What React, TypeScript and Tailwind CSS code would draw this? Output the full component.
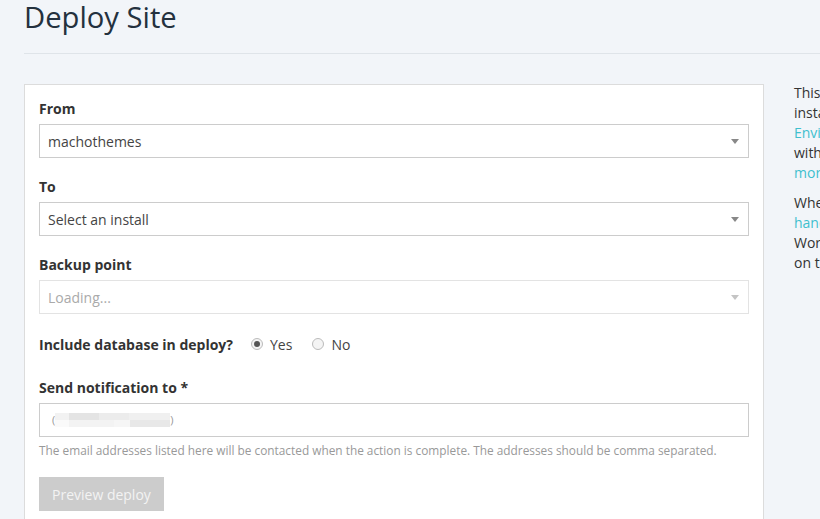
import * as React from "react";

function Caret({ color }: { color: string }) {
  return (
    <svg className="h-[5px] w-[8px] flex-shrink-0" viewBox="0 0 8 5" fill={color}>
      <path d="M0 0h8L4 5z" />
    </svg>
  );
}

interface SelectBoxProps {
  value: string;
  disabled?: boolean;
}

function SelectBox({ value, disabled }: SelectBoxProps) {
  return (
    <div
      className={
        disabled
          ? "flex h-[34px] items-center justify-between border border-[#e3e3e3] bg-white pl-[8px] pr-[9px] text-[14px] text-[#aaa]"
          : "flex h-[34px] items-center justify-between border border-[#ccc] bg-white pl-[8px] pr-[9px] text-[14px] text-[#444]"
      }
    >
      <span>{value}</span>
      <Caret color={disabled ? "#c4c4c4" : "#888"} />
    </div>
  );
}

function Label({ children }: { children: React.ReactNode }) {
  return <label className="mb-[5px] block text-[14px] font-bold leading-[20px] text-[#333]">{children}</label>;
}

function Radio({ checked, label }: { checked?: boolean; label: string }) {
  return (
    <span className="flex items-center gap-[7px] text-[14px] text-[#444]">
      <span className="flex h-[12px] w-[12px] items-center justify-center rounded-full border border-[#bbb] bg-[#f4f4f4]">
        {checked && <span className="h-[6px] w-[6px] rounded-full bg-[#555]" />}
      </span>
      {label}
    </span>
  );
}

export default function App() {
  return (
    <div
      className="h-[519px] w-[820px] overflow-hidden bg-[#f2f5f9] text-[#333]"
      style={{ fontFamily: '"Open Sans", "Noto Sans", sans-serif' }}
    >
      <div className="pl-[24px]">
        <h1 className="-mt-[1px] text-[29.2px] font-normal leading-[36px] text-[#24313e]">Deploy Site</h1>
        <div className="mt-[18px] h-px bg-[#dfe4e9]" />
      </div>

      <div className="mt-[30px] flex items-start gap-[30px] pl-[24px]">
        <div className="w-[740px] flex-shrink-0 border border-[#dcdcdc] bg-white px-[14px] pt-[14px] pb-[20px]">
          <div className="mb-[19px]">
            <Label>From</Label>
            <SelectBox value="machothemes" />
          </div>
          <div className="mb-[19px]">
            <Label>To</Label>
            <SelectBox value="Select an install" />
          </div>
          <div className="mb-[20px]">
            <Label>Backup point</Label>
            <SelectBox value="Loading..." disabled />
          </div>
          <div className="mb-[24px] flex h-[20px] items-center">
            <span className="mr-[18px] text-[14px] font-bold text-[#333]">Include database in deploy?</span>
            <div className="flex items-center gap-[20px]">
              <Radio checked label="Yes" />
              <Radio label="No" />
            </div>
          </div>
          <div>
            <Label>Send notification to *</Label>
            <div className="flex h-[34px] items-center border border-[#ccc] bg-white pl-[12px] text-[14px] text-[#555]">
              <span className="text-[11px] text-[#999]">(</span>
              <span className="flex h-[14px] w-[115px] flex-col">
                <span className="flex h-[7px]">
                  <span className="w-[14px] bg-[#f2f2f2]" />
                  <span className="w-[30px] bg-[#e4e4e4]" />
                  <span className="w-[30px] bg-[#ececec]" />
                  <span className="w-[41px] bg-[#f0f0f0]" />
                </span>
                <span className="flex h-[7px]">
                  <span className="w-[14px] bg-[#fafafa]" />
                  <span className="w-[45px] bg-[#f3f3f3]" />
                  <span className="w-[16px] bg-[#f6f6f6]" />
                  <span className="w-[40px] bg-[#e8e8e8]" />
                </span>
              </span>
              <span className="text-[11px] text-[#999]">)</span>
            </div>
            <p className="mt-[5px] text-[11.85px] leading-[16px] text-[#999]">
              The email addresses listed here will be contacted when the action is complete. The addresses should be
              comma separated.
            </p>
          </div>
          <button
            type="button"
            disabled
            className="mt-[19px] h-[34px] bg-[#cccccc] px-[13px] text-[14px] text-[#f3f3f3]"
          >
            Preview deploy
          </button>
        </div>

        <div className="-mt-[1px] w-[240px] flex-shrink-0 text-[14px] leading-[20px] text-[#333]">
          <p className="whitespace-nowrap">
            This tool copies your site from one
            <br />
            install to another. See
            <br />
            <a className="text-[#3fbfce]">Environments</a>
            <br />
            with WP Engine for
            <br />
            <a className="text-[#3fbfce]">more information</a>
          </p>
          <p className="mt-[10px] whitespace-nowrap">
            When deploying, backups come in
            <br />
            <a className="text-[#3fbfce]">handy</a> to restore your
            <br />
            WordPress site if something
            <br />
            on the destination goes wrong.
          </p>
        </div>
      </div>
    </div>
  );
}
